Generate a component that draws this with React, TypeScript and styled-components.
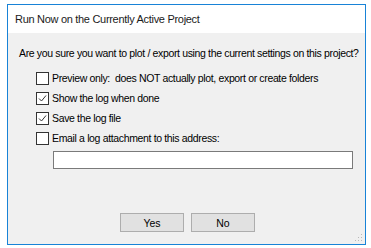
import React, { useState } from 'react';
import styled, { createGlobalStyle } from 'styled-components';

const GlobalStyle = createGlobalStyle`
  html, body {
    margin: 0;
    padding: 0;
    background: #ffffff;
  }
`;

const Page = styled.div`
  padding: 4px 0 0 7px;
`;

const Window = styled.div`
  width: 357px;
  height: 239px;
  border: 1px solid #1883d7;
  display: flex;
  flex-direction: column;
  font-family: 'Liberation Sans', Arial, sans-serif;
  color: #000;
`;

const TitleBar = styled.div`
  height: 28px;
  background: #fff;
  display: flex;
  align-items: center;
  padding-left: 7px;
  font-size: 11px;
  letter-spacing: -0.3px;
  color: #1a1a1a;
  white-space: nowrap;
`;

const Body = styled.div`
  flex: 1;
  background: #f0f0f0;
  display: flex;
  flex-direction: column;
  padding: 13px 0 0 11px;
  position: relative;
  font-size: 10.5px;
  letter-spacing: -0.35px;
  white-space: nowrap;
`;

const Question = styled.div`
  height: 14px;
  line-height: 14px;
  margin-bottom: 8px;
`;

const Options = styled.div`
  display: flex;
  flex-direction: column;
  padding-left: 17px;
`;

const Row = styled.label`
  display: flex;
  align-items: center;
  gap: 3px;
  height: 20px;
  cursor: default;
`;

const Box = styled.span`
  width: 11px;
  height: 11px;
  border: 1px solid #333;
  background: #fff;
  display: flex;
  align-items: center;
  justify-content: center;
  flex-shrink: 0;
`;

const EmailInput = styled.input`
  box-sizing: border-box;
  margin: 3px 0 0 17px;
  width: 300px;
  height: 18px;
  border: 1px solid #7a7a7a;
  background: #fff;
  padding: 0 2px;
  font: inherit;
  outline: none;
`;

const Buttons = styled.div`
  display: flex;
  gap: 7px;
  margin: 44px 0 0 101px;
`;

const Button = styled.button`
  box-sizing: border-box;
  width: 64px;
  height: 19px;
  background: #e1e1e1;
  border: 1px solid #adadad;
  font-family: 'Liberation Sans', Arial, sans-serif;
  font-size: 10.5px;
  color: #000;
  padding: 0;
`;

const Grip = styled.svg`
  position: absolute;
  right: 2px;
  bottom: 2px;
`;

const Check = () => (
  <svg width="9" height="9" viewBox="0 0 9 9">
    <path d="M1 4.5 L3.5 7 L8 1.5" fill="none" stroke="#333" strokeWidth="1" />
  </svg>
);

interface OptionProps {
  label: string;
  checked: boolean;
  onToggle: () => void;
}

const Option: React.FC<OptionProps> = ({ label, checked, onToggle }) => (
  <Row onClick={onToggle}>
    <Box>{checked && <Check />}</Box>
    <span>{label}</span>
  </Row>
);

export default function App() {
  const [opts, setOpts] = useState([false, true, true, false]);
  const labels = [
    'Preview only:\u00a0 does NOT actually plot, export or create folders',
    'Show the log when done',
    'Save the log file',
    'Email a log attachment to this address:',
  ];
  const toggle = (i: number) =>
    setOpts((o) => o.map((v, j) => (j === i ? !v : v)));

  return (
    <Page>
      <GlobalStyle />
      <Window>
        <TitleBar>Run Now on the Currently Active Project</TitleBar>
        <Body>
          <Question>
            Are you sure you want to plot / export using the current settings on this project?
          </Question>
          <Options>
            {labels.map((l, i) => (
              <Option key={i} label={l} checked={opts[i]} onToggle={() => toggle(i)} />
            ))}
            <EmailInput />
          </Options>
          <Buttons>
            <Button>Yes</Button>
            <Button>No</Button>
          </Buttons>
          <Grip width="8" height="8" viewBox="0 0 8 8">
            <rect x="6" y="0" width="1" height="1" fill="#b8b8b8" />
            <rect x="3" y="3" width="1" height="1" fill="#b8b8b8" />
            <rect x="6" y="3" width="1" height="1" fill="#b8b8b8" />
            <rect x="0" y="6" width="1" height="1" fill="#b8b8b8" />
            <rect x="3" y="6" width="1" height="1" fill="#b8b8b8" />
            <rect x="6" y="6" width="1" height="1" fill="#b8b8b8" />
          </Grip>
        </Body>
      </Window>
    </Page>
  );
}
